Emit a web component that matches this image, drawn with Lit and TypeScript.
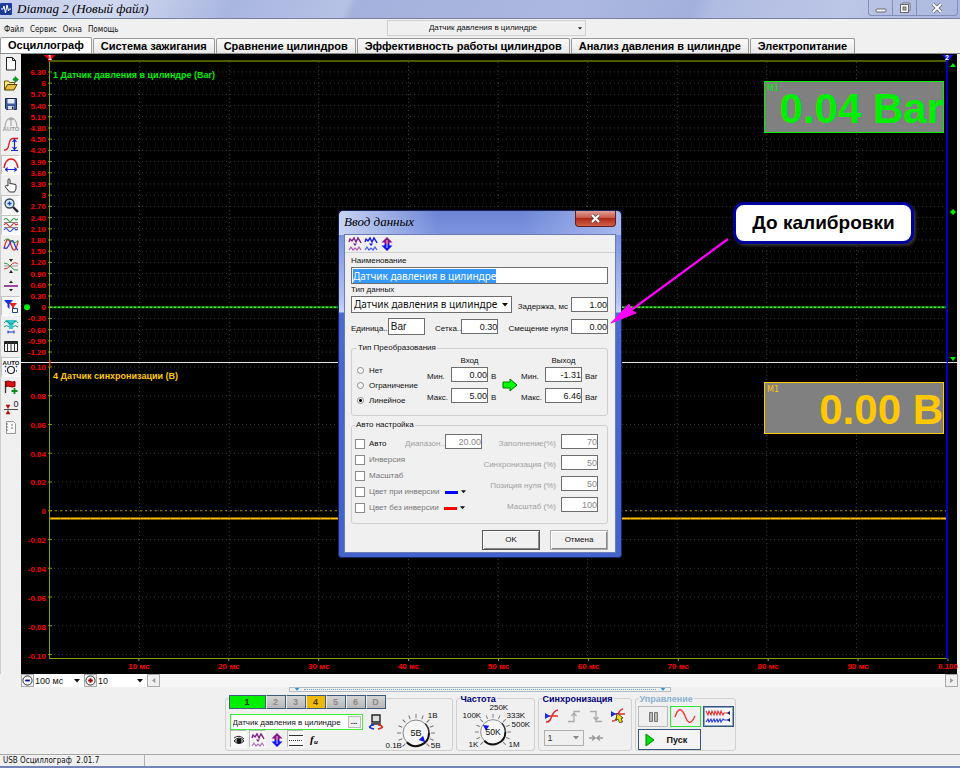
import { LitElement, html, css, svg } from "lit";
import { customElement, property } from "lit/decorators.js";
import { classMap } from "lit/directives/class-map.js";

const TABS = [
  "Осциллограф",
  "Система зажигания",
  "Сравнение цилиндров",
  "Эффективность работы цилиндров",
  "Анализ давления в цилиндре",
  "Электропитание",
];

const range = (n: number) => Array.from({ length: n }, (_, i) => i);

const wave = (y: number, color: string) =>
  svg`<path d="M1 ${y}q2-3 4 0t4 0t4 0l2-1" fill="none" stroke=${color} stroke-width="1.2"/>`;

/* 16x16 glyphs of the tool strip */
const ICONS: Record<string, unknown> = {
  page: svg`<path d="M3.500 1.500h6l3 3v9.500h-9z" fill="#fff" stroke="#222"/><path d="M9.500 1.500v3h3" fill="none" stroke="#222"/>`,
  open: svg`<path d="M1.500 14V5h4l1 1.500h5V9" fill="#ffe98a" stroke="#6b5600"/><path d="M1.500 14l3-5.500h9.500l-3 5.500z" fill="#e8c040" stroke="#4d3d00"/><path d="M10 4q0-2 2-2V.5L15.500 3.500 12 6.500V4.500z" fill="#0a1" stroke="#063" stroke-width=".6"/>`,
  save: svg`<path d="M2.500 2.500h11v11h-10l-1-1z" fill="#3c5c9c" stroke="#1a2a50"/><path d="M4.500 3h7v4.500h-7z" fill="#e8eefa"/><path d="M5 10h6v3.500h-6z" fill="#d6dce8"/><path d="M9 10.500h1.500v2.500h-1.500z" fill="#223"/>`,
  autoGrey: svg`<path d="M2 11C2 5 5 2 8 2s6 3 6 9M8 1v9M6 4l2-2 2 2" fill="none" stroke="#aaa" stroke-width="1.200"/><text x="8" y="15" font-size="6" text-anchor="middle" fill="#999" font-weight="bold">AUTO</text>`,
  amp: svg`<path d="M1 14c7 1 3-12 9-11.500l5 0" fill="none" stroke="#e01818" stroke-width="1.300"/><path d="M11.500 4v9M9.500 6l2-2.500 2 2.500M9.500 11l2 2.500 2-2.500M8 14.500h7" fill="none" stroke="#1428d8" stroke-width="1.200"/>`,
  period: svg`<path d="M1 11C2 5 5 2 8 2s6 3 7 9" fill="none" stroke="#e01818" stroke-width="1.400"/><path d="M3 12.500h10M4.500 10.500l-2.500 2 2.500 2M11.500 10.500l2.500 2-2.500 2" fill="#1428d8" stroke="#1428d8"/>`,
  hand: svg`<path d="M5 9V2.500q1-1.500 2 0V7q1-1 2 0q1-1 2 .5q1.500-1 2 .5v4l-1.500 3h-5L2 9.500q1-2 3-.5z" fill="#fff" stroke="#333"/>`,
  zoom: svg`<circle cx="6.500" cy="6.500" r="4.500" fill="#d8ecff" stroke="#345" stroke-width="1.300"/><path d="M4.500 6.500h4M6.500 4.500v4" stroke="#1540c0" stroke-width="1.400"/><path d="M10 10l5 5" stroke="#223" stroke-width="2.400"/>`,
  waves3: svg`${wave(3, "#2a9a3a")}${wave(8, "#d82a2a")}${wave(13, "#2a3ad8")}<path d="M1 5.500h14M1 10.500h14" stroke="#666" stroke-width=".8"/>`,
  overlay: svg`<path d="M1 12C4-2 6 2 8 8s5 9 7-4" fill="none" stroke="#e02828" stroke-width="1.300"/><path d="M1 10c4 6 6-9 9-6 2 2 2 8 5 9" fill="none" stroke="#2838e0" stroke-width="1.300"/><path d="M1 4q3-4 7 0t7-1" fill="none" stroke="#2a9a3a"/>`,
  merge: svg`<path d="M1 5q4 0 7 4t7 3" fill="none" stroke="#2a9a3a"/><path d="M1 11q4 0 7-4t7-1" fill="none" stroke="#c33"/><path d="M6 1h4L8 4zM6 15h4L8 12z" fill="#222"/><path d="M1 8h14" stroke="#777" stroke-width=".7"/>`,
  split: svg`<path d="M1 8h14" stroke="#80208a" stroke-width="1.600"/><path d="M6 5h4L8 2.500zM6 11h4L8 13.500z" fill="#222"/>`,
  filter: svg`<path d="M1 2h9L6.500 6v5L4.500 9V6z" fill="#1030e0"/><path d="M6 5h8l-3 3.500V13l-2-2V8.500z" fill="#e82020"/><path d="M9.500 10.500h5v4h-5z" fill="#fff" stroke="#2040a0"/>`,
  measure: svg`<path d="M2 2h12l-4 5v4h-4V7z" fill="#38c8d0"/><path d="M1 5q3-4 6 1h2q3-5 6-1M1 9q3-3 5 0M10 9q2-3 5 0" fill="none" stroke="#1a9a80"/><path d="M5 14h6M5 12.500v3M11 12.500v3" stroke="#1030c0"/>`,
  table: svg`<path d="M1.500 3.500h13v10h-13z" fill="#fff" stroke="#222"/><path d="M1.500 5h13" stroke="#222" stroke-width="2"/><path d="M4.500 4v9M8 4v9M11.500 4v9" stroke="#334"/>`,
  autoDial: svg`<text x="8" y="6" font-size="6" text-anchor="middle" fill="#111" font-weight="bold">AUTO</text><circle cx="8" cy="11" r="3.500" fill="#fff" stroke="#223" stroke-width="1.200"/><path d="M2 7l1 1M14 7l-1 1M2 12h1M13 12h1" stroke="#2038e0" stroke-width="1.500"/>`,
  flag: svg`<path d="M2.500 2v12" stroke="#333" stroke-width="1.300"/><path d="M3 2.500q2-1 4 0t5 0v5q-3 1-5 0t-4 0z" fill="#e01010" stroke="#700"/><path d="M11.500 9v6M8.500 12h6" stroke="#0a8a20" stroke-width="1.800"/>`,
  zero: svg`<path d="M1 10.500h14" stroke="#222" stroke-width=".8"/><path d="M3 6h4L5 9.500zM3 15h4L5 11.500z" fill="#b01010" stroke="#b01010" stroke-width=".6"/><text x="13" y="8" font-size="9" text-anchor="middle" fill="#222">0</text>`,
  note: svg`<path d="M3.500 2.500h7l2 2v10h-9z" fill="#fafafa" stroke="#999"/><path d="M3 5h2M3 8h2M3 11h2M8 6h2M8 9h2" stroke="#777"/>`,
};

const TOOL_GROUPS: [string, string][][] = [
  [["page", "Новый"], ["open", "Открыть"], ["save", "Сохранить"], ["autoGrey", "Авто"], ["amp", "Амплитуда"]],
  [["period", "Период"], ["hand", "Рука"], ["zoom", "Масштаб"], ["waves3", "Раздельно"], ["overlay", "Вместе"]],
  [["merge", "Сжать"], ["split", "Разделить"], ["filter", "Фильтр"], ["measure", "Измерение"], ["table", "Таблица"]],
  [["autoDial", "Автонастройка"], ["flag", "Маркер"], ["zero", "Ноль"], ["note", "Заметки"]],
];
const PRESSED = ["period", "zoom", "waves3", "filter", "autoDial"];

const zigPair = (top: string, bottom: string) => svg`
  <path d="M2 6l1-3 2 2 2-3 2 4 2-4 2 3 1 2" fill="none" stroke=${top} stroke-width="1.400"/>
  <path d="M6 7.500h4l-2 2.500z" fill=${top}/>
  <path d="M2 14l2-3 2 3 2-2 2 2 2-3 2 3" fill="none" stroke=${bottom} stroke-width="1.200"/>`;
const upDown = svg`
  <path d="M8 1l5.500 5.500h-3v1.500H5.500V6.500h-3z" fill="#8a1088"/>
  <path d="M8 15l5.500-5.500h-3V8H5.500v1.500h-3z" fill="#1010f0"/>
  <path d="M8 4v8" stroke="#fff" stroke-width=".8"/>`;
const icon = (body: unknown) => html`<svg class="ico" viewBox="0 0 16 16" aria-hidden="true">${body}</svg>`;
const caret = html`<svg class="caret" viewBox="0 0 6 4" aria-hidden="true"><path d="M0 0h6l-3 3.500z" fill="currentColor"/></svg>`;

const shared = css`
  * { box-sizing: border-box; }
  button, input, select {
    font: inherit; color: inherit; margin: 0; padding: 0; border: 0;
    border-radius: 0; background: none; outline: none; appearance: none;
  }
  .ico { width: 16px; height: 16px; display: block; flex: none; }
  .caret { width: 6px; height: 4px; flex: none; display: block; }
  .pick { display: flex; align-items: center; }
  .pick select { flex: 1; min-width: 0; height: 100%; }
  svg { overflow: visible; }
`;

@customElement("scope-view")
export class ScopeView extends LitElement {
  static styles = [shared, css`
    :host {
      display: grid; background: #000; min-width: 0;
      grid-template-columns: 28px minmax(0, 1fr) 9px;
      grid-template-rows: 8px minmax(0, 301fr) minmax(0, 296fr) 15px;
      font: bold 8px/10px "Liberation Sans", sans-serif; color: #f00;
    }
    svg { width: 100%; height: 100%; display: block; }
    .cell { min-width: 0; min-height: 0; position: relative; }
    .top { border-bottom: 2px solid #4c5a00; }
    .one { border-left: 1px solid #86a000; border-right: 2px solid #0000c0; border-bottom: 1px solid #e8e8e8; }
    .two { border-left: 1px solid #86a000; border-right: 2px solid #0000c0; border-bottom: 1px solid #86a000; }
    .line { border-bottom: 1px solid #e8e8e8; }
    .name { position: absolute; left: 3px; top: 7px; font-size: 9px; line-height: 12px; white-space: nowrap; }
    .green { color: #0e0; }
    .amber { color: #ffc800; }
    .readout {
      position: absolute; right: 2px; top: 19px; width: 180px; height: 52px;
      background: #808080; border: 1px solid currentColor;
      font: bold 42px/54px "Liberation Sans", sans-serif; text-align: right;
      white-space: nowrap;
    }
    .readout small { position: absolute; left: 2px; top: 2px; font: 8px/9px "DejaVu Sans", sans-serif; }
    text { fill: #f00; }
    .tag { fill: #fff; font-size: 7px; }
  `];

  render() {
    const y1 = (i: number) => `${(10 + 11.24 * i) / 3.01}%`;
    const y2 = (i: number) => `${(4 + 28.85 * i) / 2.96}%`;
    const fmt = (v: number) => (Number.isInteger(v) ? `${v}` : v.toFixed(2));
    const grid = (ys: string[]) => svg`
      ${ys.map((y) => svg`<line x1="4" x2="100%" y1=${y} y2=${y} stroke="#383838" stroke-dasharray="1 3"/><line x1="-2" x2="2" y1=${y} y2=${y} stroke="#86a000"/>`)}
      ${range(9).map((i) => svg`<line x1="${(i + 1) * 10}%" x2="${(i + 1) * 10}%" y1="0" y2="100%" stroke="#404040" stroke-dasharray="1 3"/>`)}`;
    return html`
      <div class="cell"></div>
      <div class="cell top">
        <svg>
          <path d="M-5 1h11L1 7z" fill="#f00"/><line x1="0" x2="0" y1="4" y2="8" stroke="#f00"/>
          <text class="tag" x="-1" y="6">1</text>
          <svg x="100%"><path d="M-6 1h11L0 7z" fill="#1010ff"/><line x1="-1" x2="-1" y1="5" y2="8" stroke="#00c" stroke-width="2"/><text class="tag" x="-3" y="6">2</text></svg>
        </svg>
      </div>
      <div class="cell"></div>

      <div class="cell line">
        <svg>
          ${range(26).map((i) => svg`<text x="25" y=${y1(i)} dy="3" text-anchor="end">${fmt(Math.round(630 - 30 * i) / 100)}</text>`)}
          <circle cx="6" cy=${y1(21)} r="3" fill="#0e0"/>
        </svg>
      </div>
      <div class="cell one">
        <svg>
          ${grid(range(26).map(y1))}
          <line x1="0" x2="100%" y1=${y1(21)} y2=${y1(21)} stroke="#009a00" stroke-width="2"/>
          <line x1="0" x2="100%" y1=${y1(21)} y2=${y1(21)} stroke="#9fe860" stroke-dasharray="2 2"/>
        </svg>
        <span class="name green">1 Датчик давления в цилиндре (Bar)</span>
        <div class="readout green"><small>M1</small>0.04 Bar</div>
      </div>
      <div class="cell line">
        <svg>
          <path d="M2 5h6l-3-4z" fill="#0e0"/>
          <svg y="50%"><path d="M5-3l3 3-3 3-3-3z" fill="#0e0"/></svg>
          <svg y="100%"><path d="M2-5h6l-3 4z" fill="#0e0"/></svg>
        </svg>
      </div>

      <div class="cell">
        <svg>${range(11).map((i) => svg`<text x="25" y=${y2(i)} dy="3" text-anchor="end">${i === 5 ? "0" : (0.1 - 0.02 * i).toFixed(2)}</text>`)}</svg>
      </div>
      <div class="cell two">
        <svg>
          ${grid(range(11).map(y2))}
          <line x1="0" x2="0" y1="-3" y2="4" stroke="#f00"/>
          <line x1="0" x2="100%" y1=${y2(5)} y2=${y2(5)} stroke="#b09000" stroke-dasharray="2 3"/>
          <line x1="0" x2="100%" y1="52.700%" y2="52.700%" stroke="#ffc000" stroke-width="2"/>
          <line x1="0" x2="100%" y1="52.700%" y2="52.700%" stroke="#a07000" stroke-dasharray="1 9"/>
        </svg>
        <span class="name amber">4 Датчик синхронизации (В)</span>
        <div class="readout amber"><small>M1</small>0.00 В</div>
      </div>
      <div class="cell"></div>

      <div class="cell"></div>
      <div class="cell">
        <svg>${range(10).map((i) => svg`<text x="${(i + 1) * 10}%" y="10" text-anchor="middle">${i === 9 ? "0.100" : `${(i + 1) * 10} мс`}</text><line x1="${(i + 1) * 10}%" x2="${(i + 1) * 10}%" y1="0" y2="2" stroke="#999"/>`)}</svg>
      </div>
      <div class="cell"></div>
    `;
  }
}

@customElement("input-dialog")
export class InputDialog extends LitElement {
  static styles = [shared, css`
    :host {
      display: block; width: 284px; padding: 0 5px 4px; border-radius: 5px 5px 3px 3px;
      border: 1px solid #16265c;
      background: linear-gradient(90deg, #c8d4f4, rgba(120, 140, 220, 0) 35%, rgba(120, 140, 220, 0) 65%, #a8b8ec) 0 0 / 100% 24px no-repeat,
        linear-gradient(#6c84d4 0, #7c94e0 24px, #b4c4f0 90px, #c8d8f8 101px, #4a6ad0 102px, #4262cc);
      font: 8px/10px "Liberation Sans", sans-serif; color: #111;
    }
    .head { height: 23px; display: flex; justify-content: space-between; align-items: flex-start; }
    h2 { margin: 0; font: italic 13px/22px "Liberation Serif", serif; color: #000; white-space: nowrap; }
    .close {
      width: 41px; height: 16px; border: 1px solid #5c2020; border-top: 0; border-radius: 0 0 4px 4px;
      background: linear-gradient(#e0a098, #c85848 45%, #b02818 50%, #d06048);
      display: grid; place-items: center;
    }
    .close svg { width: 11px; height: 9px; }
    .body { background: #f0f0f0; border: 1px solid #6a7cb4; padding-bottom: 3px; }
    .bar { height: 18px; display: flex; border-bottom: 1px solid #d0d0d0; padding-left: 2px; align-items: center; }
    .bar button { width: 16px; height: 16px; }
    .form { padding: 2px 7px 0 6px; display: flex; flex-direction: column; }
    .cap { height: 12px; line-height: 12px; }
    input.box, .drop {
      background: #fff; border: 1px solid #6e6e6e; height: 15px; width: 37px; flex: none;
      font-size: 9px; line-height: 13px; text-align: right;
    }
    input.wide { width: 100%; height: 17px; text-align: left; font: 10px/13px "Noto Sans", sans-serif; padding-left: 1px; }
    input.wide::selection { background: #3399ff; color: #fff; }
    input.left { text-align: left; font-size: 10px; padding-left: 2px; height: 17px; }
    .drop { width: 161px; height: 17px; padding: 0 3px 0 2px; }
    .drop select { font: 10px/13px "Noto Sans", sans-serif; }
    .row { display: flex; align-items: center; justify-content: space-between; }
    .pair { display: flex; align-items: center; gap: 3px; white-space: nowrap; }
    .near { gap: 0; }
    .low { padding-top: 4px; }
    .mt { margin-top: 5px; }
    fieldset { border: 1px solid #cfcfcf; border-radius: 3px; margin: 8px 0 0; padding: 0 0 0 5px; min-width: 0; }
    fieldset + fieldset { margin-top: 4px; padding-left: 3px; }
    legend { padding: 0 1px; line-height: 10px; height: 10px; }
    .conv { height: 62px; display: grid; grid-template-columns: 70px 75px 19px 77px; justify-content: start; }
    .opts { padding-top: 10px; display: grid; grid-auto-rows: 15px; align-content: start; }
    .opt { display: flex; align-items: center; gap: 5px; white-space: nowrap; }
    .opt input { width: 7px; height: 7px; border: 1px solid #888; border-radius: 50%; background: #fff; flex: none; }
    .opt input:checked { background: radial-gradient(#000 0 1px, #fff 2px); }
    .io { display: grid; grid-template-columns: 24px 37px 16px; grid-template-rows: 11px 15px 6px 15px; padding-top: 3px; align-content: start; }
    .io .title { grid-area: 1 / 2; text-align: center; }
    .io .r1 { grid-row: 2; }
    .io .r2 { grid-row: 4; }
    .io label, .io .u { padding-top: 5px; white-space: nowrap; }
    .io .u { padding-left: 3px; }
    .arrow { width: 16px; height: 14px; margin-top: 25px; }
    .auto { height: 93px; display: flex; color: #777; }
    .checks { width: 50px; flex: none; padding-top: 6px; display: grid; grid-auto-rows: 16px; align-content: start; }
    .checks .opt { gap: 4px; }
    .checks input { width: 10px; height: 10px; border-radius: 0; border-color: #8a8a8a; }
    .dark { color: #111; }
    .swatch { width: 13px; height: 3px; margin-left: 1px; flex: none; }
    .blue { background: #00f; }
    .red { background: #f00; }
    .opt .caret { width: 5px; color: #111; margin-left: -1px; }
    .span { padding-top: 4px; display: flex; align-items: flex-start; white-space: nowrap; height: 20px; }
    .span label { padding-top: 5px; }
    .pcts { margin-left: auto; padding: 4px 9px 0 0; display: grid; grid-auto-rows: 15px; row-gap: 6px; align-content: start; grid-template-columns: auto 37px; column-gap: 5px; color: #a0a0a0; }
    .pcts label { text-align: right; padding-top: 5px; white-space: nowrap; }
    .dim { color: #a0a0a0; }
    .auto input.box { color: #888; }
    .act { display: flex; justify-content: flex-end; gap: 12px; padding: 7px 1px 0 0; }
    .act button {
      width: 56px; height: 18px; background: #f0f0f0;
      box-shadow: inset 1px 1px #fff, inset -1px -1px #888, 0 0 0 1px #aaa;
    }
    .act .main { box-shadow: inset 1px 1px #fff, inset -1px -1px #888, 0 0 0 1px #555; }
  `];

  firstUpdated() {
    const field = this.renderRoot.querySelector<HTMLInputElement>("#title");
    field?.focus();
    field?.select();
  }

  private io(id: string, title: string, min: string, max: string, unit: string) {
    return html`<div class="io">
      <span class="title">${title}</span>
      <label class="r1" for="${id}-min">Мин.</label>
      <input class="box r1" id="${id}-min" .value=${min} />
      <span class="u r1">${unit}</span>
      <label class="r2" for="${id}-max">Макс.</label>
      <input class="box r2" id="${id}-max" .value=${max} />
      <span class="u r2">${unit}</span>
    </div>`;
  }

  render() {
    const pct: [string, string][] = [["Заполнение(%)", "70"], ["Синхронизация (%)", "50"], ["Позиция нуля (%)", "50"], ["Масштаб (%)", "100"]];
    return html`
      <div class="head">
        <h2>Ввод данных</h2>
        <button class="close" aria-label="Закрыть">
          <svg viewBox="0 0 11 9"><path d="M2 1l7 7M9 1L2 8" stroke="#555" stroke-width="3.600"/><path d="M2 1l7 7M9 1L2 8" stroke="#fff" stroke-width="2"/></svg>
        </button>
      </div>
      <div class="body">
        <div class="bar">
          <button aria-label="Сигнал">${icon(zigPair("#80208a", "#a858b0"))}</button>
          <button aria-label="Сглаживание">${icon(zigPair("#1818f0", "#4858f0"))}</button>
          <button aria-label="Смещение">${icon(upDown)}</button>
        </div>
        <div class="form">
          <label class="cap" for="title">Наименование</label>
          <input class="box wide" id="title" .value=${"Датчик давления в цилиндре"} />
          <label class="cap" for="kind">Тип данных</label>
          <div class="row">
            <div class="pick drop"><select id="kind"><option>Датчик давления в цилиндре</option></select>${caret}</div>
            <div class="pair"><label class="low" for="delay">Задержка, мс</label><input class="box" id="delay" .value=${"1.00"} /></div>
          </div>
          <div class="row mt">
            <div class="pair near"><label class="low" for="unit">Единица..</label><input class="box left" id="unit" .value=${"Bar"} /></div>
            <div class="pair near"><label class="low" for="step">Сетка..</label><input class="box" id="step" .value=${"0.30"} /></div>
            <div class="pair"><label class="low" for="zero">Смещение нуля</label><input class="box" id="zero" .value=${"0.00"} /></div>
          </div>
          <fieldset>
            <legend>Тип Преобразования</legend>
            <div class="conv">
              <div class="opts">
                ${["Нет", "Ограничение", "Линейное"].map((t) => html`<label class="opt"><input type="radio" name="conv" ?checked=${t === "Линейное"} />${t}</label>`)}
              </div>
              ${this.io("in", "Вход", "0.00", "5.00", "В")}
              <svg class="arrow" viewBox="0 0 16 14"><path d="M1 4h7V1l7 6-7 6v-3H1z" fill="#0f0" stroke="#070"/></svg>
              ${this.io("out", "Выход", "-1.31", "6.46", "Bar")}
            </div>
          </fieldset>
          <fieldset>
            <legend>Авто настройка</legend>
            <div class="auto">
              <div class="checks">
                <label class="opt dark"><input type="checkbox" />Авто</label>
                <label class="opt"><input type="checkbox" />Инверсия</label>
                <label class="opt"><input type="checkbox" />Масштаб</label>
                <label class="opt"><input type="checkbox" />Цвет при инверсии <i class="swatch blue"></i>${caret}</label>
                <label class="opt"><input type="checkbox" />Цвет без инверсии <i class="swatch red"></i>${caret}</label>
              </div>
              <div class="span"><label class="dim" for="range">Диапазон..</label><input class="box" id="range" .value=${"20.00"} /></div>
              <div class="pcts">${pct.map(([t, v], i) => html`<label for="p${i}">${t}</label><input class="box" id="p${i}" .value=${v} />`)}</div>
            </div>
          </fieldset>
          <div class="act"><button class="main">OK</button><button>Отмена</button></div>
        </div>
      </div>
    `;
  }
}

@customElement("round-knob")
export class RoundKnob extends LitElement {
  @property() value = "";
  @property({ type: Number }) angle = 0;

  static styles = css`
    :host { display: block; }
    svg { width: 100%; height: 100%; display: block; overflow: visible; }
    text { font: 9px "Liberation Sans", sans-serif; fill: #111; text-anchor: middle; }
  `;

  render() {
    const ticks = range(13).map((i) => -225 + i * 22.5);
    return html`<svg viewBox="-20 -20 40 40" role="img" aria-label=${this.value}>
      ${ticks.map((a) => svg`<line x1="15" x2="19" y1="0" y2="0" stroke="#777" transform="rotate(${a})"/>`)}
      <circle r="13" fill="#f6f6f6" stroke="#888"/>
      <path d="M13 0A13 13 0 0 1-9.200 9.200" fill="none" stroke="#111" stroke-width="2"/>
      <path d="M13 0A13 13 0 0 0 9.200-9.200" fill="none" stroke="#333" stroke-width="1.500"/>
      <path d="M13 0l-6-3v6z" fill="#1010f0" transform="rotate(${this.angle})"/>
      <text y="3">${this.value}</text>
    </svg>`;
  }
}

@customElement("app-root")
export class AppRoot extends LitElement {
  static styles = [shared, css`
    :host {
      display: flex; flex-direction: column; min-height: 100vh; position: relative; box-sizing: border-box;
      background: #f0f0f0; color: #111; font: 8px/10px "Liberation Sans", sans-serif;
      border-bottom: 2px solid #7484b8; overflow: hidden;
    }
    .titlebar {
      height: 19px; flex: none; display: flex; align-items: center; border-bottom: 1px solid #7680a0;
      background: linear-gradient(115deg, #c4cdea 0, #d0d8ef 12%, #a9b6df 24%, #b6c1e5 36%, #a4b1dc 37%, #acb8e0 60%, #a2b0dc 72%, #b0bce2 74%, #bcc6e6 88%, #aab6de 100%);
    }
    .logo { width: 12px; height: 12px; margin: 0 5px 0 0; }
    h1 { margin: 0; flex: 1; font: italic 13px/18px "Liberation Serif", serif; color: #000; white-space: nowrap; }
    .win { align-self: flex-start; display: flex; height: 16px; margin-right: 2px; border: 1px solid #8290b8; border-top: 0; border-radius: 0 0 4px 4px; }
    .win button { width: 24px; display: grid; place-items: center; border-right: 1px solid #8290b8; }
    .win button:last-child { width: 40px; border: 0; }
    .win svg { width: 12px; height: 10px; }
    .menubar { height: 19px; flex: none; display: flex; align-items: center; position: relative; font: 8px/10px "DejaVu Sans Condensed", "DejaVu Sans", sans-serif; }
    .menu { display: flex; gap: 6px; padding: 3px 0 0 4px; }
    .sensor {
      position: absolute; left: 387px; right: 374px; top: 1px; height: 16px; border: 1px solid #d0d0d0;
      font: 8px/10px "Liberation Sans", sans-serif; padding-right: 3px;
    }
    .sensor .caret { width: 4px; height: 3px; }
    .sensor select { text-align: center; text-align-last: center; }
    .tabs { display: flex; height: 16px; flex: none; align-items: flex-end; gap: 1px; border-bottom: 1px solid #8c8c8c; font: bold 11px/13px "Liberation Sans", sans-serif; }
    .tabs button { height: 15px; padding: 0 7px; border: 1px solid #999; border-bottom: 0; border-radius: 2px 2px 0 0; background: linear-gradient(#fafafa, #e8e8e8); color: #000; white-space: nowrap; }
    .tabs .on { height: 16px; background: #fff; }
    .work { display: flex; flex: 1 1 620px; }
    .tools { width: 21px; flex: none; border-left: 1px solid #ccc; display: flex; flex-direction: column; gap: 1px; }
    .tools button { width: 19px; height: 20px; display: grid; place-items: center; }
    .tools .down { background: #f8f8f8; border: 1px solid #c4c4c4; border-right-color: #fff; border-bottom-color: #fff; }
    scope-view { flex: 1; margin-right: 3px; }
    .zoombar { margin: 0 2px 0 21px; height: 13px; display: flex; flex: none; background: #f6f6f6; font-size: 9px; }
    .zoombar button { width: 13px; background: #f0f0f0; border: 1px solid #aaa; display: grid; place-items: center; }
    .zoombar .pick { background: #fff; width: 50px; padding: 0 4px 0 1px; }
    .zoombar svg { width: 11px; height: 11px; }
    .zoombar .caret { width: 6px; height: 4px; }
    .zoombar .end { margin-left: auto; }
    .splitter { width: 382px; height: 5px; margin: 0 auto; border: 1px solid #b4bcc8; display: flex; align-items: center; justify-content: space-between; padding: 0 4px; flex: none; gap: 4px; color: #2a8ae8; }
    .splitter .dots { flex: 1; border-top: 1px dotted #6aa8e0; }
    .splitter .caret { height: 3px; }
    .panels { display: flex; justify-content: center; gap: 3px; height: 62px; flex: none; padding-top: 6px; }
    .group { position: relative; border: 1px solid #d0d0d0; border-radius: 3px; height: 53px; min-width: 0; }
    .group h3 { position: absolute; left: 3px; top: -5px; margin: 0; padding: 0 1px; background: #f0f0f0; font: bold 9px/11px "Liberation Sans", sans-serif; color: #00007c; white-space: nowrap; }
    .channel { width: 228px; display: flex; justify-content: space-between; }
    .freq { width: 79px; }
    .sync { width: 94px; padding: 9px 5px 0; }
    .ctl { width: 101px; padding: 7px 2px 0; }
    .group.ctl h3 { color: #8cb0d4; }
    .left { display: flex; flex-direction: column; align-items: flex-start; margin-top: -4px; padding-left: 3px; }
    .chs { display: flex; font: bold 9px/11px "Liberation Sans", sans-serif; }
    .chs button { width: 20px; height: 14px; border: 1px solid #3c5c7c; background: linear-gradient(#d4d4d4, #b8b8b8); color: #8a8a8a; border-left-color: #eee; }
    .chs .one { width: 37px; background: #00f000; color: #063000; border-left-color: #3c5c7c; }
    .chs .four { background: #f0b808; color: #503800; }
    .namebar { display: flex; align-items: center; gap: 5px; margin: 5px 0 1px 1px; }
    .nm { display: flex; width: 133px; height: 16px; border: 1px solid #3cf03c; background: #fff; align-items: center; padding-right: 1px; }
    .nm input { flex: 1; min-width: 0; padding-left: 2px; font-size: 8px; height: 12px; }
    .nm button { width: 13px; height: 12px; background: #f0f0f0; border: 1px solid #bbb; font-weight: bold; line-height: 6px; flex: none; }
    .mini { display: flex; gap: 3px; padding-left: 2px; }
    .mini button { width: 16px; height: 17px; }
    .mini .down { background: #f8f8f8; box-shadow: -1px -1px #bbb; }
    .dial { position: relative; width: 66px; }
    .dial round-knob { position: absolute; width: 40px; height: 40px; right: 16px; top: 14px; }
    .dial span, .freq span { position: absolute; font-size: 8px; line-height: 8px; }
    .d1 { right: 14px; top: 13px; } .d2 { left: 0; bottom: 0; } .d3 { right: 11px; bottom: 0; }
    .freq round-knob { position: absolute; width: 38px; height: 38px; left: 17px; top: 14px; }
    .f1 { left: 6px; top: 13px; } .f2 { left: 33px; top: 5px; } .f3 { left: 50px; top: 13px; }
    .f4 { left: 55px; top: 22px; } .f5 { left: 52px; bottom: 1px; } .f6 { left: 12px; bottom: 1px; }
    .trig { display: flex; gap: 5px; justify-content: space-between; }
    .src { display: flex; gap: 4px; align-items: center; margin-top: 6px; color: #999; }
    .src .pick { width: 40px; height: 16px; border: 1px solid #b0b0b0; padding: 0 4px 0 3px; color: #888; font-size: 9px; }
    .src select { color: #333; }
    .modes { display: grid; grid-template-columns: 30px 31px 31px; gap: 2px; grid-template-rows: 21px 21px; }
    .modes button { border: 1px solid #b8b8b8; display: grid; place-items: center; }
    .modes svg { width: 24px; height: 17px; }
    .modes .sine { border-color: #30e830; }
    .modes .zig { border-color: #34567c; box-shadow: inset 0 0 0 1px #8aa4c4; background: #f8f8f8; }
    .modes .run { grid-column: span 2; border-color: #34567c; display: flex; align-items: center; gap: 12px; padding-left: 5px; font: bold 9px/12px "Liberation Sans", sans-serif; background: #f4f4f4; }
    .modes .run svg { width: 11px; height: 14px; }
    .status { height: 12px; flex: none; display: flex; border-top: 1px solid #a8a8a8; font: 8px/12px "DejaVu Sans Condensed", "DejaVu Sans", sans-serif; }
    .status span { width: 145px; padding-left: 3px; border-right: 1px solid #b0b0b0; white-space: pre; }
    input-dialog { position: absolute; left: calc(50% - 142px); top: 210px; }
    .pointer { position: absolute; left: calc(50% + 130px); top: 236px; width: 120px; height: 90px; }
    .callout {
      position: absolute; left: calc(50% + 253px); top: 202px; border: 3px solid #00009c; border-radius: 11px;
      background: #fff; color: #000; width: 181px; height: 42px; text-align: center;
      font: bold 19px/36px "Liberation Sans", sans-serif; white-space: nowrap; box-shadow: 2px 2px 3px #333;
    }
  `];

  render() {
    return html`
      <header class="titlebar">
        <svg class="logo" viewBox="0 0 12 12"><rect width="12" height="12" rx="1" fill="#1c3c9c"/><path d="M1 6h2l1-3 1.500 7L7 2l1.500 6 1-2H11" fill="none" stroke="#fff"/></svg>
        <h1>Diamag 2 (Новый файл)</h1>
        <div class="win">
          <button aria-label="Свернуть"><svg viewBox="0 0 12 10"><rect x="1" y="6" width="10" height="3" rx="1" fill="#fff" stroke="#667"/></svg></button>
          <button aria-label="Развернуть"><svg viewBox="0 0 12 10"><rect x="3" y="0" width="8" height="8" rx="1" fill="#fff" stroke="#667"/><rect x="1.500" y="1.500" width="8" height="8" fill="#fff" stroke="#667"/><rect x="4" y="4" width="3" height="3" fill="#aab" stroke="#667"/></svg></button>
          <button aria-label="Закрыть"><svg viewBox="0 0 12 10"><path d="M2 1l8 8M10 1L2 9" stroke="#667" stroke-width="3.600"/><path d="M2 1l8 8M10 1L2 9" stroke="#fff" stroke-width="2"/></svg></button>
        </div>
      </header>
      <div class="menubar">
        <nav class="menu">${["Файл", "Сервис", "Окна", "Помощь"].map((m) => html`<button>${m}</button>`)}</nav>
        <div class="pick sensor"><select aria-label="Датчик"><option>Датчик давления в цилиндре</option></select>${caret}</div>
      </div>
      <div class="tabs" role="tablist">
        ${TABS.map((t, i) => html`<button role="tab" class=${classMap({ on: i === 0 })}>${t}</button>`)}
      </div>
      <main class="work">
        <div class="tools">
          ${TOOL_GROUPS.map((g) => html`<div>${g.map(([k, label]) => html`<button class=${classMap({ down: PRESSED.includes(k) })} aria-label=${label}>${icon(ICONS[k])}</button>`)}</div>`)}
        </div>
        <scope-view></scope-view>
      </main>
      <div class="zoombar">
        <button aria-label="Уменьшить"><svg viewBox="0 0 12 12"><circle cx="6" cy="6" r="5" fill="#fff" stroke="#222"/><path d="M3.500 6h5" stroke="#0000a0" stroke-width="2"/></svg></button>
        <div class="pick"><select aria-label="Развёртка"><option>100 мс</option></select>${caret}</div>
        <button aria-label="Увеличить"><svg viewBox="0 0 12 12"><circle cx="6" cy="6" r="5" fill="#fff" stroke="#222"/><path d="M3.500 6h5M6 3.500v5" stroke="#a00000" stroke-width="2"/></svg></button>
        <div class="pick"><select aria-label="Делений"><option>10</option></select>${caret}</div>
        <button aria-label="Влево"><svg viewBox="0 0 12 12"><path d="M8 3v6L4.500 6z" fill="#999"/></svg></button>
        <button class="end" aria-label="Вправо"><svg viewBox="0 0 12 12"><path d="M4.500 3v6L8 6z" fill="#999"/></svg></button>
      </div>
      <div class="splitter">${caret}<i class="dots"></i>${caret}</div>
      <section class="panels">
        <div class="group channel">
          <div class="left">
            <div class="chs">
              ${["1", "2", "3", "4", "5", "6", "D"].map((c) => html`<button class=${classMap({ one: c === "1", four: c === "4" })}>${c}</button>`)}
            </div>
            <div class="namebar">
              <div class="nm"><input aria-label="Название канала" .value=${"Датчик давления в цилиндре"} /><button>...</button></div>
              ${icon(svg`<path d="M4 1h8v7H4z" fill="#ddd" stroke="#222" stroke-width="1.400"/><path d="M3 10h10" stroke="#222" stroke-width="1.500"/><path d="M6 11c-5 0-5 3-2 3.500l2 .5M3 12.500l-2 1" fill="none" stroke="#1428e8" stroke-width="1.400"/><path d="M10 11c5 0 5 3 2 3.500l-2 .5M13 12.500l2 1" fill="none" stroke="#e82020" stroke-width="1.400"/>`)}
            </div>
            <div class="mini">
              <button class="down" aria-label="Показать">${icon(svg`<path d="M3 9q5-6 10 0q-5 5-10 0z" fill="#ccc" stroke="#222"/><circle cx="8" cy="9" r="2.500" fill="#111"/><path d="M3 6q5-4 10 1" fill="none" stroke="#222"/>`)}</button>
              <button class="down" aria-label="Сигнал">${icon(zigPair("#80208a", "#b070b8"))}</button>
              <button aria-label="Смещение">${icon(upDown)}</button>
              <button class="down" aria-label="Линии">${icon(svg`<path d="M1 3.500h14M1 13.500h14" stroke="#333"/><path d="M1 8.500h14" stroke="#333" stroke-dasharray="1 1"/>`)}</button>
              <button aria-label="Функция">${icon(svg`<text x="3" y="11" font-size="11" font-weight="bold" font-style="italic" font-family="Liberation Serif">f</text><text x="7" y="12" font-size="7" font-weight="bold" font-style="italic" font-family="Liberation Serif">и</text>`)}</button>
            </div>
          </div>
          <div class="dial">
            <round-knob value="5В" angle="45"></round-knob>
            <span class="d1">1В</span><span class="d2">0.1В</span><span class="d3">5В</span>
          </div>
        </div>
        <div class="group freq">
          <h3>Частота</h3>
          <round-knob value="50K" angle="-145"></round-knob>
          <span class="f1">100K</span><span class="f2">250K</span><span class="f3">333K</span>
          <span class="f4">500K</span><span class="f5">1M</span><span class="f6">1K</span>
        </div>
        <div class="group sync">
          <h3>Синхронизация</h3>
          <div class="trig">
            ${icon(svg`<path d="M2 14c7 1 4-11 12-12M1 8h13" fill="none" stroke="#e82828" stroke-width="1.400"/><path d="M1 5l5 3-5 3z" fill="#1428f0"/>`)}
            ${icon(svg`<path d="M2 13.500h6v-10h6M5.500 8L8 5l2.500 3" fill="none" stroke="#aaa" stroke-width="1.300"/>`)}
            ${icon(svg`<path d="M2 3.500h6v10h6M5.500 9L8 12l2.500-3" fill="none" stroke="#aaa" stroke-width="1.300"/>`)}
            ${icon(svg`<path d="M2 13c7 1 4-11 11-12M1 6h14" fill="none" stroke="#e82828" stroke-width="1.400"/><path d="M1 3l5 3-5 3z" fill="#1428f0"/><path d="M7 5l6 5-2 .5 1.500 3.500-3 .5L8 11l-2 1.500z" fill="#ffe800" stroke="#222" stroke-width=".8"/>`)}
          </div>
          <div class="src">
            <div class="pick"><select aria-label="Источник"><option>1</option></select>${caret}</div>
            ${icon(svg`<path d="M1 8h5M4 5.500L7 8l-3 2.500M15 8h-5M12 5.500L9 8l3 2.500" fill="none" stroke="#999" stroke-width="1.500"/>`)}
          </div>
        </div>
        <div class="group ctl">
          <h3>Управление</h3>
          <div class="modes">
            <button aria-label="Пауза"><svg viewBox="0 0 24 17"><path d="M8.500 4.500h3v9h-3zM13.500 4.500h3v9h-3z" fill="#b8b8b8" stroke="#777"/></svg></button>
            <button class="sine" aria-label="Синус"><svg viewBox="0 0 24 17"><path d="M2 9C5-1 9 0 12 8s6 9 10 0" fill="none" stroke="#f03030" stroke-width="1.300"/></svg></button>
            <button class="zig" aria-label="Каналы"><svg viewBox="0 0 24 17"><path d="M0 3l2 4 1-4 2 4 1-4 2 4 1-4 2 4 1-4 2 4 1-4 2 4 1-2h4" fill="none" stroke="#e83030" stroke-width="1.100"/><path d="M0 14l2-3 1 3 2-3 1 3 2-3 1 3 2-3 1 3 2-3 1 3 2-3 1 1h4" fill="none" stroke="#2838e8" stroke-width="1.100"/><path d="M24 3v4l-3-2zM24 10v4l-3-2z" fill="#126"/></svg></button>
            <button class="run"><svg viewBox="0 0 11 14"><path d="M2 1v12l8-6z" fill="#00e010" stroke="#080"/></svg>Пуск</button>
          </div>
        </div>
      </section>
      <footer class="status"><span>USB Осциллограф  2.01.7</span></footer>

      <input-dialog></input-dialog>
      <svg class="pointer" viewBox="0 0 120 90"><path d="M118 3L20 75" stroke="#f0f" stroke-width="2.200"/><path d="M1 87l18-19 2 6 5 3z" fill="#f0f" stroke="#f0f"/></svg>
      <div class="callout">До калибровки</div>
    `;
  }
}
